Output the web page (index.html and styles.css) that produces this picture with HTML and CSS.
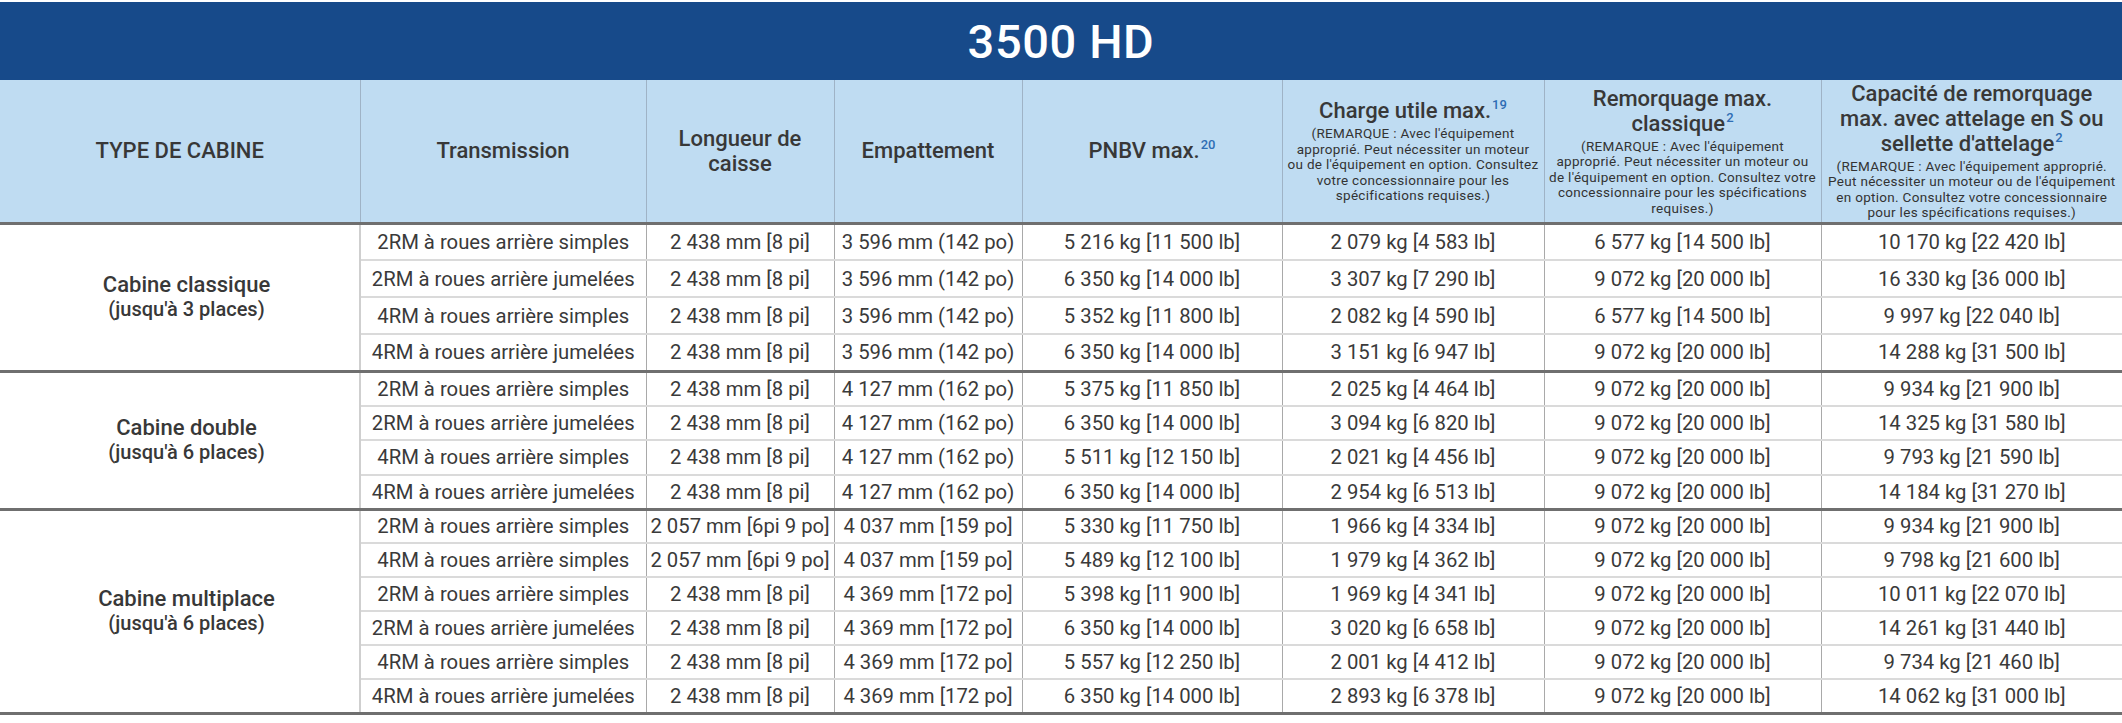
FILE: index.html
```html
<!DOCTYPE html>
<html lang="fr">
<head>
<meta charset="utf-8">
<title>3500 HD</title>
<link rel="stylesheet" href="styles.css">
</head>
<body>
<div class="sheet">
  <div class="title">3500 HD</div>
  <table class="specs">
    <colgroup>
      <col class="w-cab"><col class="w-trans"><col class="w-len"><col class="w-wb"><col class="w-gvwr"><col class="w-pay"><col class="w-tow"><col class="w-five">
    </colgroup>
    <thead>
      <tr>
        <th><span class="h">TYPE DE CABINE</span></th>
        <th><span class="h">Transmission</span></th>
        <th><span class="h">Longueur de<br>caisse</span></th>
        <th><span class="h">Empattement</span></th>
        <th><span class="h">PNBV max.<sup>20</sup></span></th>
        <th><span class="h">Charge utile max.<sup>19</sup></span><span class="note">(REMARQUE : Avec l'équipement<br>approprié. Peut nécessiter un moteur<br>ou de l'équipement en option. Consultez<br>votre concessionnaire pour les<br>spécifications requises.)</span></th>
        <th><span class="h">Remorquage max.<br>classique<sup>2</sup></span><span class="note">(REMARQUE : Avec l'équipement<br>approprié. Peut nécessiter un moteur ou<br>de l'équipement en option. Consultez votre<br>concessionnaire pour les spécifications<br>requises.)</span></th>
        <th><span class="h">Capacité de remorquage<br>max. avec attelage en S ou<br>sellette d'attelage<sup>2</sup></span><span class="note">(REMARQUE : Avec l'équipement approprié.<br>Peut nécessiter un moteur ou de l'équipement<br>en option. Consultez votre concessionnaire<br>pour les spécifications requises.)</span></th>
      </tr>
    </thead>
    <tbody class="g1">
      <tr>
        <td class="cab" rowspan="4"><span class="cab-name">Cabine classique</span><span class="cab-seats">(jusqu'à 3 places)</span></td>
        <td>2RM à roues arrière simples</td><td>2 438 mm [8 pi]</td><td>3 596 mm (142 po)</td><td>5 216 kg [11 500 lb]</td><td>2 079 kg [4 583 lb]</td><td>6 577 kg [14 500 lb]</td><td>10 170 kg [22 420 lb]</td>
      </tr>
      <tr><td>2RM à roues arrière jumelées</td><td>2 438 mm [8 pi]</td><td>3 596 mm (142 po)</td><td>6 350 kg [14 000 lb]</td><td>3 307 kg [7 290 lb]</td><td>9 072 kg [20 000 lb]</td><td>16 330 kg [36 000 lb]</td></tr>
      <tr><td>4RM à roues arrière simples</td><td>2 438 mm [8 pi]</td><td>3 596 mm (142 po)</td><td>5 352 kg [11 800 lb]</td><td>2 082 kg [4 590 lb]</td><td>6 577 kg [14 500 lb]</td><td>9 997 kg [22 040 lb]</td></tr>
      <tr><td>4RM à roues arrière jumelées</td><td>2 438 mm [8 pi]</td><td>3 596 mm (142 po)</td><td>6 350 kg [14 000 lb]</td><td>3 151 kg [6 947 lb]</td><td>9 072 kg [20 000 lb]</td><td>14 288 kg [31 500 lb]</td></tr>
    </tbody>
    <tbody class="g2">
      <tr>
        <td class="cab" rowspan="4"><span class="cab-name">Cabine double</span><span class="cab-seats">(jusqu'à 6 places)</span></td>
        <td>2RM à roues arrière simples</td><td>2 438 mm [8 pi]</td><td>4 127 mm (162 po)</td><td>5 375 kg [11 850 lb]</td><td>2 025 kg [4 464 lb]</td><td>9 072 kg [20 000 lb]</td><td>9 934 kg [21 900 lb]</td>
      </tr>
      <tr><td>2RM à roues arrière jumelées</td><td>2 438 mm [8 pi]</td><td>4 127 mm (162 po)</td><td>6 350 kg [14 000 lb]</td><td>3 094 kg [6 820 lb]</td><td>9 072 kg [20 000 lb]</td><td>14 325 kg [31 580 lb]</td></tr>
      <tr><td>4RM à roues arrière simples</td><td>2 438 mm [8 pi]</td><td>4 127 mm (162 po)</td><td>5 511 kg [12 150 lb]</td><td>2 021 kg [4 456 lb]</td><td>9 072 kg [20 000 lb]</td><td>9 793 kg [21 590 lb]</td></tr>
      <tr><td>4RM à roues arrière jumelées</td><td>2 438 mm [8 pi]</td><td>4 127 mm (162 po)</td><td>6 350 kg [14 000 lb]</td><td>2 954 kg [6 513 lb]</td><td>9 072 kg [20 000 lb]</td><td>14 184 kg [31 270 lb]</td></tr>
    </tbody>
    <tbody class="g3">
      <tr>
        <td class="cab" rowspan="6"><span class="cab-name">Cabine multiplace</span><span class="cab-seats">(jusqu'à 6 places)</span></td>
        <td>2RM à roues arrière simples</td><td>2 057 mm [6pi 9 po]</td><td>4 037 mm [159 po]</td><td>5 330 kg [11 750 lb]</td><td>1 966 kg [4 334 lb]</td><td>9 072 kg [20 000 lb]</td><td>9 934 kg [21 900 lb]</td>
      </tr>
      <tr><td>4RM à roues arrière simples</td><td>2 057 mm [6pi 9 po]</td><td>4 037 mm [159 po]</td><td>5 489 kg [12 100 lb]</td><td>1 979 kg [4 362 lb]</td><td>9 072 kg [20 000 lb]</td><td>9 798 kg [21 600 lb]</td></tr>
      <tr><td>2RM à roues arrière simples</td><td>2 438 mm [8 pi]</td><td>4 369 mm [172 po]</td><td>5 398 kg [11 900 lb]</td><td>1 969 kg [4 341 lb]</td><td>9 072 kg [20 000 lb]</td><td>10 011 kg [22 070 lb]</td></tr>
      <tr><td>2RM à roues arrière jumelées</td><td>2 438 mm [8 pi]</td><td>4 369 mm [172 po]</td><td>6 350 kg [14 000 lb]</td><td>3 020 kg [6 658 lb]</td><td>9 072 kg [20 000 lb]</td><td>14 261 kg [31 440 lb]</td></tr>
      <tr><td>4RM à roues arrière simples</td><td>2 438 mm [8 pi]</td><td>4 369 mm [172 po]</td><td>5 557 kg [12 250 lb]</td><td>2 001 kg [4 412 lb]</td><td>9 072 kg [20 000 lb]</td><td>9 734 kg [21 460 lb]</td></tr>
      <tr><td>4RM à roues arrière jumelées</td><td>2 438 mm [8 pi]</td><td>4 369 mm [172 po]</td><td>6 350 kg [14 000 lb]</td><td>2 893 kg [6 378 lb]</td><td>9 072 kg [20 000 lb]</td><td>14 062 kg [31 000 lb]</td></tr>
    </tbody>
  </table>
</div>
</body>
</html>
```

FILE: styles.css
```css
* { box-sizing: border-box; }

html, body {
  margin: 0;
  padding: 0;
  background: #ffffff;
}

body {
  font-family: Roboto, "Liberation Sans", sans-serif;
  color: #3a3a3a;
}

.sheet {
  width: 2122px;
  padding-top: 2px;
}

.title {
  height: 78px;
  background: #174a8a;
  color: #ffffff;
  font-size: 47px;
  font-weight: 500;
  display: flex;
  align-items: center;
  justify-content: center;
  letter-spacing: 0.6px;
}

.specs {
  width: 2122px;
  table-layout: fixed;
  border-collapse: collapse;
}

.w-cab { width: 360px; }
.w-trans { width: 286px; }
.w-len { width: 188px; }
.w-wb { width: 188px; }
.w-gvwr { width: 260px; }
.w-pay { width: 262px; }
.w-tow { width: 277px; }
.w-five { width: 301px; }

.specs thead th {
  background: #bfdcf2;
  height: 143px;
  padding: 0 2px;
  text-align: center;
  vertical-align: middle;
  font-weight: 500;
  border-left: 1px solid #9fb3c6;
  border-bottom: 3px solid #6f6f6f;
  white-space: nowrap;
}

.specs thead th:first-child { border-left: none; }

.h {
  display: block;
  font-size: 22px;
  line-height: 25px;
  color: #383838;
}

.note {
  display: block;
  margin-top: 3px;
  font-size: 13.5px;
  line-height: 15.5px;
  letter-spacing: 0.3px;
  font-weight: 400;
  color: #333333;
}

sup {
  font-size: 13px;
  line-height: 0;
  vertical-align: 9px;
  color: #2e6db4;
  font-weight: 500;
  margin-left: 1px;
}

.specs tbody {
  border-bottom: 3px solid #6f6f6f;
}

.specs td {
  text-align: center;
  vertical-align: middle;
  font-size: 20.3px;
  font-weight: 400;
  color: #3a3a3a;
  padding: 0;
  white-space: nowrap;
  border-left: 1px solid #a9a9a9;
  border-top: 2px solid #dadada;
}

.specs tbody tr:first-child td { border-top: none; }

.specs td.cab {
  border-left: none;
  border-right: 2px solid #cfcfcf;
}

.g1 tr { height: 37px; }
.g2 tr { height: 34.5px; }
.g3 tr { height: 34px; }

.cab-name {
  display: block;
  font-size: 22px;
  line-height: 24px;
  font-weight: 500;
  color: #383838;
  padding-left: 14px;
}

.cab-seats {
  display: block;
  font-size: 20px;
  line-height: 24px;
  font-weight: 500;
  color: #383838;
  padding-left: 14px;
}
```
